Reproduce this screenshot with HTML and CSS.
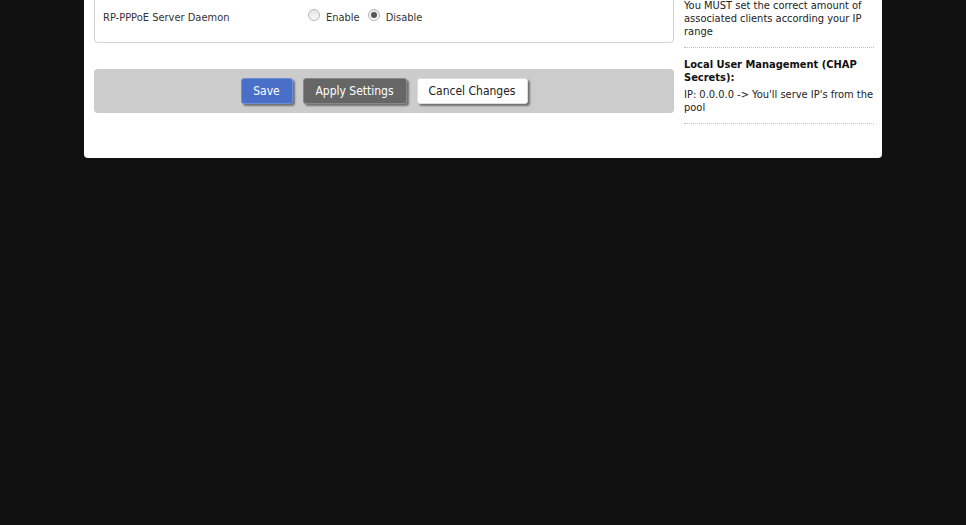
FILE: index.html
```html
<!DOCTYPE html>
<html>
<head>
<meta charset="utf-8">
<link rel="stylesheet" href="styles.css">
</head>
<body>
<div class="panel">
  <div class="main">
    <div class="fieldset">
      <div class="row">
        <div class="label">RP-PPPoE Server Daemon</div>
        <div class="field">
          <span class="radio"></span><span class="opt">Enable</span>
          <span class="radio checked"></span><span class="opt">Disable</span>
        </div>
      </div>
    </div>
    <div class="bar">
      <button class="btn save">Save</button>
      <button class="btn apply">Apply Settings</button>
      <button class="btn cancel">Cancel Changes</button>
    </div>
  </div>
  <div class="help">
    <div class="item first">
      <p>You MUST set the correct amount of associated clients according your IP range</p>
    </div>
    <div class="item">
      <h4>Local User Management (CHAP Secrets):</h4>
      <p>IP: 0.0.0.0 -&gt; You'll serve IP's from the pool</p>
    </div>
  </div>
</div>
</body>
</html>
```
FILE: styles.css
```css
html, body {
  margin: 0;
  padding: 0;
  background: #111111;
  height: 100%;
  overflow: hidden;
}
body {
  font-family: "DejaVu Sans Condensed", "DejaVu Sans", sans-serif;
  font-size: 11px;
  color: #333;
}
.panel {
  width: 798px;
  margin-left: 84px;
  margin-top: -38px;
  padding: 0 8px 0 10px;
  box-sizing: border-box;
  background: #fff;
  border-radius: 0 0 4px 4px;
  display: flex;
  align-items: flex-start;
  gap: 10px;
}
.main {
  width: 580px;
  padding-top: 30px;
  padding-bottom: 45px;
}
.fieldset {
  border: 1px solid #d3d3d3;
  border-radius: 4px;
  padding: 0 8px;
  height: 51px;
  box-sizing: border-box;
}
.row {
  display: flex;
  align-items: center;
  margin-top: 8px;
  height: 32px;
}
.label {
  width: 205px;
}
.field {
  display: flex;
  align-items: center;
}
.radio {
  width: 12px;
  height: 12px;
  box-sizing: border-box;
  border-radius: 50%;
  border: 1px solid #b8b8b8;
  background: linear-gradient(#e6e6e6, #f8f8f8);
  margin-right: 6px;
  position: relative;
  top: -2px;
}
.radio.checked::after {
  content: "";
  position: absolute;
  left: 2px;
  top: 2px;
  width: 6px;
  height: 6px;
  border-radius: 50%;
  background: #555;
}
.opt {
  margin-right: 8px;
}
.bar {
  margin-top: 26px;
  background: #cccccc;
  border-radius: 4px;
  height: 44px;
  display: flex;
  justify-content: center;
  align-items: center;
  gap: 10px;
}
.btn {
  font-family: inherit;
  font-size: 12px;
  height: 26px;
  border-radius: 3px;
  padding: 0;
  box-shadow: 2px 2px 2px rgba(0, 0, 0, 0.45);
  cursor: pointer;
}
.save {
  width: 52px;
  background: #4a6fc8;
  border: 1px solid #6f8ed6;
  color: #fff;
}
.apply {
  width: 104px;
  background: #666666;
  border: 1px solid #888;
  color: #fff;
}
.cancel {
  width: 111px;
  background: #ffffff;
  border: 1px solid #ddd;
  color: #222;
}
.help {
  width: 190px;
  line-height: 13px;
  padding-top: 37px;
}
.item {
  border-bottom: 1px dotted #bbb;
  padding: 10px 0 9px;
}
.item.first {
  padding-top: 0;
  padding-bottom: 9px;
}
.item p {
  margin: 0;
  color: #222;
}
.item h4 {
  margin: 0 0 4px;
  font-size: 11px;
  font-weight: bold;
  color: #111;
}
```
